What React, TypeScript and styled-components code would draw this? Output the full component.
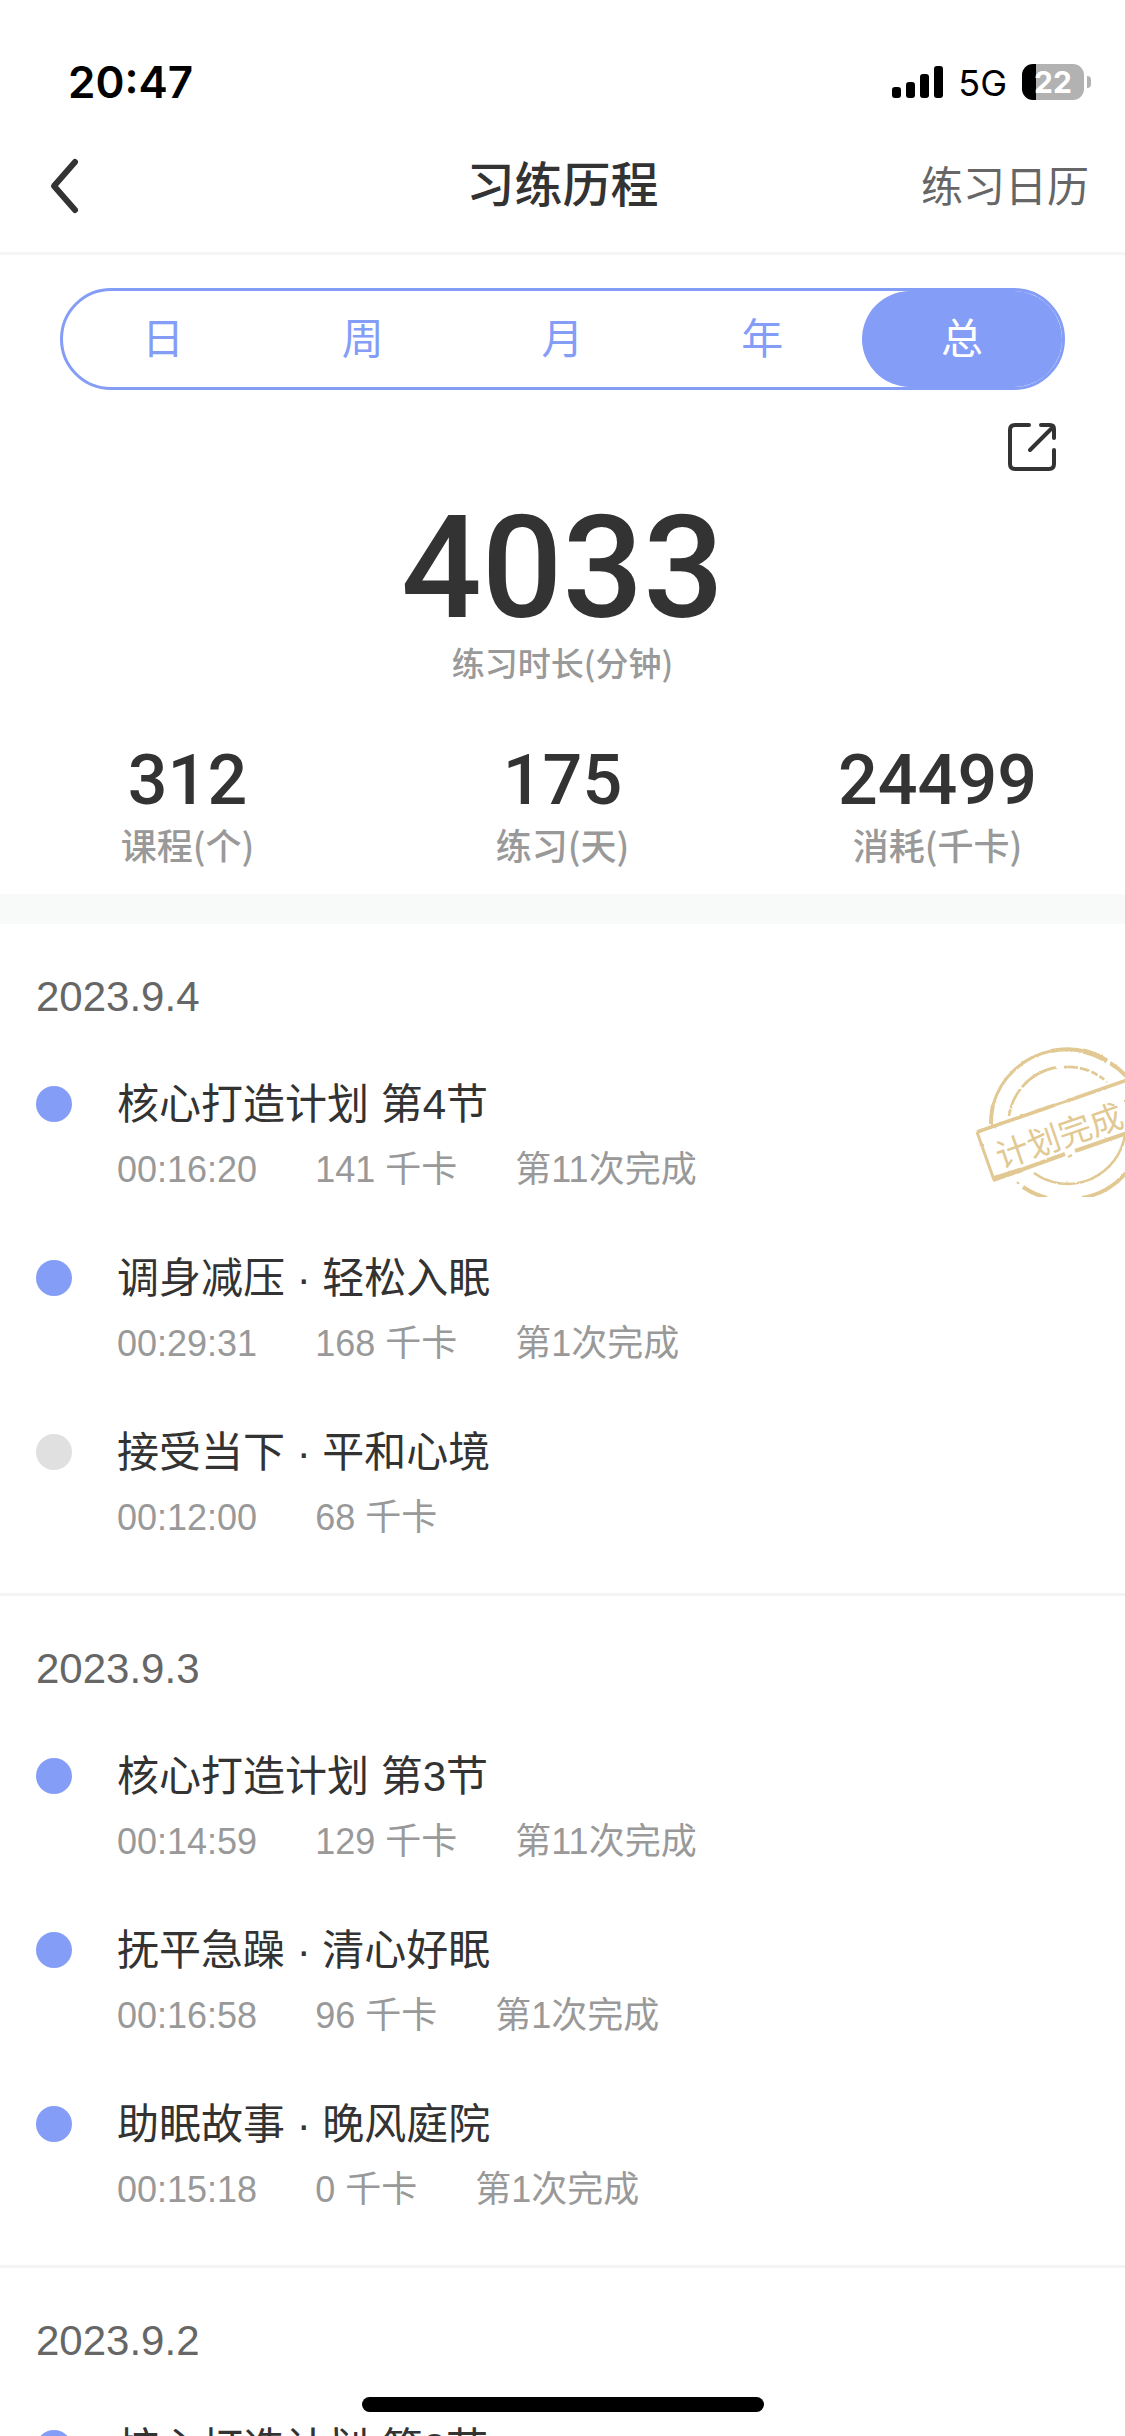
import React, { useState } from "react";
import styled, { createGlobalStyle } from "styled-components";

const accent = "#849df6";
const ink = "#333333";
const muted = "#999999";

const GlobalStyle = createGlobalStyle`
  *, *::before, *::after { box-sizing: border-box; }
  body {
    margin: 0;
    background: #ffffff;
    color: ${ink};
    font-family: "Liberation Sans", "Noto Sans CJK SC", sans-serif;
  }
  h1, h2, h3, p, ul, dl, dd { margin: 0; padding: 0; }
  h1, h2, h3 { font-weight: 400; }
  ul { list-style: none; }
  button { font: inherit; color: inherit; background: none; border: 0; padding: 0; cursor: pointer; }
`;

const Screen = styled.div`
  display: flex;
  flex-direction: column;
  height: 100vh;
  overflow: hidden;
  background: #ffffff;
`;

const StatusBar = styled.div`
  display: flex;
  align-items: center;
  justify-content: space-between;
  height: 120px;
  padding: 44px 34px 0 68px;
  flex: none;
  color: #000000;
  font-family: Inter, sans-serif;
`;

const Clock = styled.time`
  font-size: 44px;
  font-weight: 600;
  line-height: 60px;
`;

const StatusIcons = styled.div`
  display: flex;
  align-items: center;
  gap: 15px;
`;

const Network = styled.span`
  padding-top: 2px;
  font-size: 36px;
  font-weight: 400;
  line-height: 48px;
`;

const Battery = styled.div`
  display: flex;
  align-items: center;
  gap: 3px;
`;

const BatteryBody = styled.div`
  width: 62px;
  height: 36px;
  border-radius: 11px;
  background: linear-gradient(to right, #000000 22%, #b2b2b2 22%);
  color: #ffffff;
  font-size: 30px;
  font-weight: 700;
  line-height: 36px;
  text-align: center;
`;

const BatteryTip = styled.div`
  width: 4px;
  height: 12px;
  border-radius: 0 6px 6px 0;
  background: #b2b2b2;
`;

const NavBar = styled.header`
  display: grid;
  grid-template-columns: 1fr auto 1fr;
  align-items: center;
  height: 135px;
  padding: 0 36px;
  border-bottom: 3px solid #f6f6f6;
  flex: none;
`;

const BackButton = styled.button`
  display: flex;
  width: 72px;
  height: 60px;
  padding-left: 12px;
  align-items: center;
`;

const Title = styled.h1`
  font-size: 48px;
  font-weight: 500;
  line-height: 72px;
`;

const CalendarLink = styled.a`
  justify-self: end;
  padding-top: 4px;
  color: #666666;
  font-size: 42px;
  line-height: 60px;
  text-decoration: none;
`;

const Summary = styled.section`
  display: flex;
  flex-direction: column;
  padding: 33px 0 26px;
  border-bottom: 30px solid #f8fafa;
  flex: none;
`;

const Tabs = styled.div`
  display: flex;
  height: 102px;
  margin: 0 60px;
  border: 3px solid ${accent};
  border-radius: 51px;
`;

const Tab = styled.button<{ $active: boolean }>`
  flex: 1;
  padding-top: 2px;
  border-radius: 48px;
  background: ${(p) => (p.$active ? accent : "transparent")};
  color: ${(p) => (p.$active ? "#ffffff" : accent)};
  font-size: 42px;
  line-height: 60px;
`;

const ShareButton = styled.button`
  display: flex;
  align-self: flex-end;
  margin: 33px 69px 38px 0;
`;

const Total = styled.div`
  display: flex;
  flex-direction: column;
  align-items: center;
  gap: 11px;
`;

const TotalValue = styled.strong`
  font-family: Roboto, sans-serif;
  font-size: 142px;
  font-weight: 500;
  line-height: 120px;
`;

const TotalLabel = styled.span`
  color: ${muted};
  font-family: "Noto Sans CJK SC", sans-serif;
  font-size: 33px;
  font-weight: 500;
  line-height: 44px;
`;

const Stats = styled.dl`
  display: grid;
  grid-template-columns: repeat(3, 1fr);
  margin-top: 61px;
`;

const Stat = styled.div`
  display: flex;
  flex-direction: column-reverse;
  align-items: center;
  gap: 5px;
`;

const StatLabel = styled.dt`
  color: ${muted};
  font-family: "Noto Sans CJK SC", sans-serif;
  font-size: 36px;
  font-weight: 500;
  line-height: 48px;
`;

const StatValue = styled.dd`
  font-family: Roboto, sans-serif;
  font-size: 70px;
  font-weight: 500;
  line-height: 70px;
`;

const History = styled.main`
  flex: 1;
  min-height: 0;
  overflow-y: auto;
  scrollbar-width: none;
`;

const Day = styled.section`
  display: flex;
  flex-direction: column;
  gap: 46px;
  padding: 43px 0 48px;
  border-bottom: 3px solid #f4f4f4;
`;

const DayTitle = styled.h2`
  padding-left: 36px;
  color: #666666;
  font-size: 42px;
  line-height: 60px;
`;

const Sessions = styled.ul`
  display: flex;
  flex-direction: column;
  gap: 50px;
`;

const Session = styled.li`
  position: relative;
  display: grid;
  grid-template-columns: 36px 1fr;
  column-gap: 45px;
  row-gap: 8px;
  padding: 0 36px;
  align-items: center;
`;

const Dot = styled.span<{ $done: boolean }>`
  width: 36px;
  height: 36px;
  border-radius: 50%;
  background: ${(p) => (p.$done ? accent : "#e0e0e0")};
`;

const SessionTitle = styled.h3`
  padding-top: 2px;
  font-size: 42px;
  line-height: 60px;
`;

const Meta = styled.p`
  grid-column: 2;
  display: flex;
  gap: 58px;
  color: ${muted};
  font-size: 36px;
  line-height: 54px;
`;

const StampMark = styled.svg`
  position: absolute;
  top: -26px;
  right: 0;
`;

const StampText = styled.text`
  font-family: "Noto Sans CJK SC", sans-serif;
  font-size: 33px;
  font-weight: 400;
`;

const HomeIndicator = styled.div`
  position: fixed;
  bottom: 24px;
  left: 50%;
  width: 402px;
  height: 15px;
  margin-left: -201px;
  border-radius: 8px;
  background: #000000;
`;

type Entry = {
  title: string;
  time: string;
  energy: number;
  times?: number;
  planDone?: boolean;
};

const days: { date: string; entries: Entry[] }[] = [
  {
    date: "2023.9.4",
    entries: [
      { title: "核心打造计划 第4节", time: "00:16:20", energy: 141, times: 11, planDone: true },
      { title: "调身减压 · 轻松入眠", time: "00:29:31", energy: 168, times: 1 },
      { title: "接受当下 · 平和心境", time: "00:12:00", energy: 68 },
    ],
  },
  {
    date: "2023.9.3",
    entries: [
      { title: "核心打造计划 第3节", time: "00:14:59", energy: 129, times: 11 },
      { title: "抚平急躁 · 清心好眠", time: "00:16:58", energy: 96, times: 1 },
      { title: "助眠故事 · 晚风庭院", time: "00:15:18", energy: 0, times: 1 },
    ],
  },
  {
    date: "2023.9.2",
    entries: [{ title: "核心打造计划 第2节", time: "00:15:40", energy: 135, times: 11 }],
  },
];

const stats = [
  { label: "课程(个)", value: "312" },
  { label: "练习(天)", value: "175" },
  { label: "消耗(千卡)", value: "24499" },
];

const periods = ["日", "周", "月", "年", "总"];

function Signal() {
  return (
    <svg width="51" height="32" viewBox="0 0 51 32" aria-hidden="true">
      <rect x="0" y="21" width="9" height="11" rx="3" />
      <rect x="14" y="16" width="9" height="16" rx="3" />
      <rect x="28" y="8" width="9" height="24" rx="3" />
      <rect x="42" y="0" width="9" height="32" rx="3" />
    </svg>
  );
}

function PlanStamp() {
  return (
    <StampMark width="150" height="150" viewBox="0 0 150 150" role="img" aria-label="计划完成">
      <defs>
        <filter id="worn" x="-5%" y="-5%" width="110%" height="110%">
          <feTurbulence type="fractalNoise" baseFrequency="0.3" numOctaves="2" seed="4" result="noise" />
          <feDisplacementMap in="SourceGraphic" in2="noise" scale="2" xChannelSelector="R" yChannelSelector="G" />
        </filter>
      </defs>
      <g fill="none" stroke="#e2c993" filter="url(#worn)">
        <path d="M16 77A76 76 0 0 1 18 58" strokeWidth="4" />
        <path d="M18 58A76 76 0 0 1 76 4" strokeWidth="3" />
        <path d="M76 4A76 76 0 0 1 108 4" strokeWidth="4" />
        <path d="M108 4A76 76 0 0 1 132 14" strokeWidth="5" />
        <path d="M135 16A76 76 0 0 1 151 29" strokeWidth="4" />
        <path d="M48 140A76 76 0 0 0 72 151" strokeWidth="4" />
        <path d="M107 151A76 76 0 0 0 151 126" strokeWidth="4" />
        <path d="M42 135l2 2" strokeWidth="2" />
        <path d="M34 69A58 58 0 0 1 83 20" strokeWidth="2.6" strokeDasharray="7 1 22 2 40" />
        <path d="M89 20A58 58 0 0 1 132 35" strokeWidth="2.6" strokeDasharray="14 2 10 2 7 2 6 3" />
        <path d="M59 126A58 58 0 0 0 150 88" strokeWidth="2.6" />
        <path d="M2 85L80 58" strokeWidth="3.6" />
        <path d="M80 58L92 54" strokeWidth="2.4" />
        <path d="M92 54L152 33" strokeWidth="3.6" />
        <path d="M2 85L19 133" strokeWidth="3" />
        <path d="M18 133L90 107" strokeWidth="4" />
        <path d="M100 104L152 86" strokeWidth="4" />
        <path d="M18 132L46 123" strokeWidth="5" />
        <path d="M93 110l4 -2M149 54l2 0" strokeWidth="2" />
      </g>
      <StampText x="84" y="101" textAnchor="middle" fill="#e2c993" transform="rotate(-19 84 88)">
        计划完成
      </StampText>
    </StampMark>
  );
}

export default function App() {
  const [period, setPeriod] = useState("总");

  return (
    <Screen>
      <GlobalStyle />
      <StatusBar>
        <Clock>20:47</Clock>
        <StatusIcons>
          <Signal />
          <Network>5G</Network>
          <Battery>
            <BatteryBody>22</BatteryBody>
            <BatteryTip />
          </Battery>
        </StatusIcons>
      </StatusBar>

      <NavBar>
        <BackButton aria-label="返回">
          <svg width="32" height="60" viewBox="0 0 32 60" fill="none" stroke={ink} strokeWidth="6" strokeLinecap="round" strokeLinejoin="round">
            <path d="M27 6L6 30L27 54" />
          </svg>
        </BackButton>
        <Title>习练历程</Title>
        <CalendarLink href="#calendar">练习日历</CalendarLink>
      </NavBar>

      <Summary>
        <Tabs role="tablist">
          {periods.map((p) => (
            <Tab key={p} role="tab" aria-selected={p === period} $active={p === period} onClick={() => setPeriod(p)}>
              {p}
            </Tab>
          ))}
        </Tabs>
        <ShareButton aria-label="分享">
          <svg width="48" height="48" viewBox="0 0 48 48" fill="none" stroke={ink} strokeWidth="4" strokeLinecap="round" strokeLinejoin="round">
            <path d="M21 2H7Q2 2 2 7V41Q2 46 7 46H41Q46 46 46 41V27" />
            <path d="M33 2H42Q46 2 46 6V15M45 4L22 27" />
          </svg>
        </ShareButton>
        <Total>
          <TotalValue>4033</TotalValue>
          <TotalLabel>练习时长(分钟)</TotalLabel>
        </Total>
        <Stats>
          {stats.map((s) => (
            <Stat key={s.label}>
              <StatLabel>{s.label}</StatLabel>
              <StatValue>{s.value}</StatValue>
            </Stat>
          ))}
        </Stats>
      </Summary>

      <History>
        {days.map((day) => (
          <Day key={day.date}>
            <DayTitle>{day.date}</DayTitle>
            <Sessions>
              {day.entries.map((e) => (
                <Session key={e.title}>
                  <Dot $done={e.times !== undefined} />
                  <SessionTitle>{e.title}</SessionTitle>
                  <Meta>
                    <span>{e.time}</span>
                    <span>{e.energy} 千卡</span>
                    {e.times !== undefined && <span>第{e.times}次完成</span>}
                  </Meta>
                  {e.planDone && <PlanStamp />}
                </Session>
              ))}
            </Sessions>
          </Day>
        ))}
      </History>
      <HomeIndicator />
    </Screen>
  );
}
